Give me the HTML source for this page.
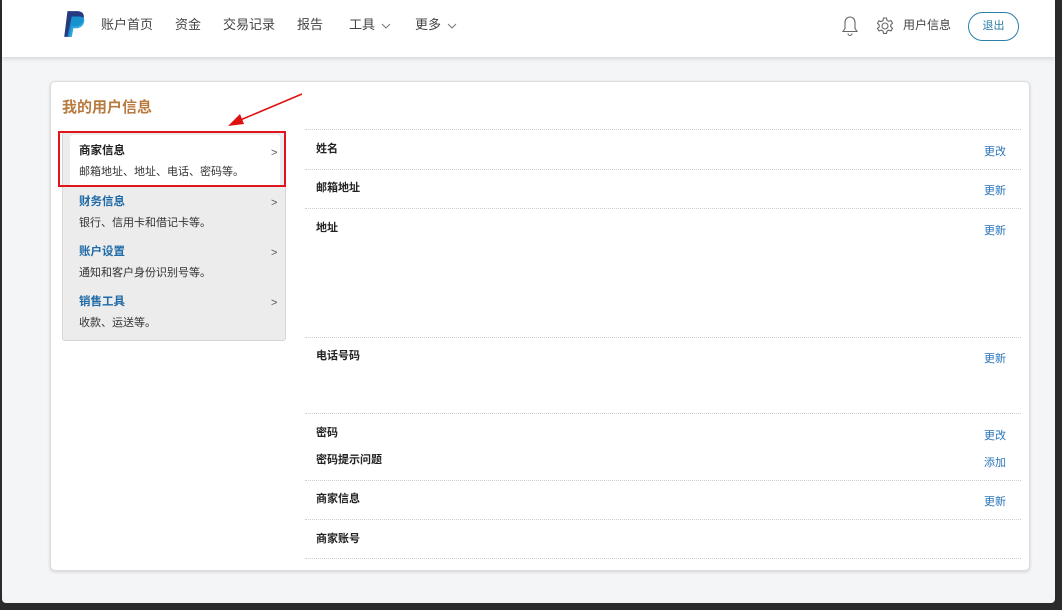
<!DOCTYPE html>
<html><head><meta charset="utf-8"><style>
*{margin:0;padding:0;box-sizing:border-box}
body{width:1062px;height:610px;background:#2b2b2b;font-family:"Liberation Sans","Noto Sans CJK SC",sans-serif;position:relative;overflow:hidden}
.page{position:absolute;left:2px;top:0;width:1053px;height:603px;background:#f4f5f7;border-radius:0 0 4px 4px}
.hdr{position:absolute;left:0;top:0;width:1053px;height:57px;background:#fff;box-shadow:0 2px 4px rgba(0,0,0,.12)}
.nav{position:absolute;top:14px;font-size:13px;color:#444}
.card{position:absolute;left:50px;top:81px;width:980px;height:490px;background:#fff;border:1px solid #dcdcdc;border-radius:5px;box-shadow:0 1px 3px rgba(0,0,0,.15)}
.title{position:absolute;left:62px;top:96px;font-size:15px;color:#b97a3f;font-weight:bold}
.side{position:absolute;left:62px;top:132px;width:224px;height:209px;background:#ececec;border:1px solid #d6d6d6;border-radius:3px}
.it{position:absolute;left:16px;font-size:11px;color:#333}
.it b{display:block;font-size:11.5px;color:#1e6aa8;margin-bottom:5px}
.arr{position:absolute;left:208px;font-size:11px;color:#555}
.line{position:absolute;left:305px;width:716px;border-top:1px dotted #cfcfcf}
.lab{position:absolute;left:316px;font-size:11px;font-weight:bold;color:#222}
.act{position:absolute;left:984px;font-size:11px;color:#2a74b8}
.chev{display:inline-block;vertical-align:middle;margin-left:6px}
</style></head><body>
<div class="page">
<div class="hdr">
<svg style="position:absolute;left:60px;top:10px" width="26" height="28" viewBox="0 0 24 26"><path d="M5 1h9c5 0 7 3 6 7-1 5-4 7-9 7H9l-2 10H2z" fill="#253b80"/><path d="M9 6h7c4 0 5 2 4.5 5-1 4-4 6-8 6h-2l-1.5 8H5z" fill="#179bd7" opacity=".9"/></svg>
<span class="nav" style="left:99px">账户首页</span>
<span class="nav" style="left:173px">资金</span>
<span class="nav" style="left:221px">交易记录</span>
<span class="nav" style="left:295px">报告</span>
<span class="nav" style="left:347px">工具<svg class="chev" width="10" height="6"><path d="M1 1l4 4 4-4" fill="none" stroke="#777"/></svg></span>
<span class="nav" style="left:413px">更多<svg class="chev" width="10" height="6"><path d="M1 1l4 4 4-4" fill="none" stroke="#777"/></svg></span>
<svg style="position:absolute;left:839px;top:15px" width="18" height="22" viewBox="0 0 18 22"><path d="M9 2c-3 0-5 2.5-5 5.5v6L2 16.5h14l-2-3v-6C14 4.5 12 2 9 2zM7 18.5a2 2 0 0 0 4 0" fill="none" stroke="#666" stroke-width="1.1"/></svg>
<svg style="position:absolute;left:873px;top:16px" width="20" height="20" viewBox="0 0 20 20"><circle cx="10" cy="10" r="3" fill="none" stroke="#666" stroke-width="1.1"/><path d="M8.5 2h3l.5 2.3 1.8 1 2.2-.8 1.5 2.6-1.7 1.6v2l1.7 1.6-1.5 2.6-2.2-.8-1.8 1-.5 2.3h-3l-.5-2.3-1.8-1-2.2.8-1.5-2.6L4.2 11V9L2.5 7.4 4 4.8l2.2.8 1.8-1z" fill="none" stroke="#666" stroke-width="1.1"/></svg>
<span class="nav" style="left:901px;font-size:12px;top:16px">用户信息</span>
<div style="position:absolute;left:966px;top:12px;width:51px;height:29px;border:1.5px solid #2c7fa8;border-radius:15px;font-size:11px;color:#2c7fa8;text-align:center;line-height:26px">退出</div>
</div>
</div>
<div class="card"></div>
<div class="title">我的用户信息</div>
<svg style="position:absolute;left:220px;top:88px" width="90" height="45"><line x1="82" y1="6" x2="18" y2="33" stroke="#e01010" stroke-width="1.5"/><path d="M8 38l12-12 4 10z" fill="#e01010"/></svg>
<div class="side">
<div style="position:absolute;left:7px;top:2px;width:210px;height:52px;background:#fff;border-radius:3px"></div>
<div class="it" style="top:9px"><b style="color:#222">商家信息</b>邮箱地址、地址、电话、密码等。</div><span class="arr" style="top:14px">&gt;</span>
<div class="it" style="top:60px"><b>财务信息</b>银行、信用卡和借记卡等。</div><span class="arr" style="top:64px">&gt;</span>
<div class="it" style="top:110px"><b>账户设置</b>通知和客户身份识别号等。</div><span class="arr" style="top:114px">&gt;</span>
<div class="it" style="top:160px"><b>销售工具</b>收款、运送等。</div><span class="arr" style="top:164px">&gt;</span>
</div>
<div style="position:absolute;left:58px;top:131px;width:228px;height:56px;border:2px solid #e0141c"></div>
<div class="line" style="top:129px"></div><div class="line" style="top:169px"></div><div class="line" style="top:208px"></div><div class="line" style="top:337px"></div><div class="line" style="top:413px"></div><div class="line" style="top:480px"></div><div class="line" style="top:519px"></div><div class="line" style="top:558px"></div>
<div class="lab" style="top:140px">姓名</div><div class="act" style="top:143px">更改</div>
<div class="lab" style="top:179px">邮箱地址</div><div class="act" style="top:182px">更新</div>
<div class="lab" style="top:219px">地址</div><div class="act" style="top:222px">更新</div>
<div class="lab" style="top:347px">电话号码</div><div class="act" style="top:350px">更新</div>
<div class="lab" style="top:424px">密码</div><div class="act" style="top:427px">更改</div>
<div class="lab" style="top:451px">密码提示问题</div><div class="act" style="top:454px">添加</div>
<div class="lab" style="top:490px">商家信息</div><div class="act" style="top:493px">更新</div>
<div class="lab" style="top:530px">商家账号</div>
</body></html>
